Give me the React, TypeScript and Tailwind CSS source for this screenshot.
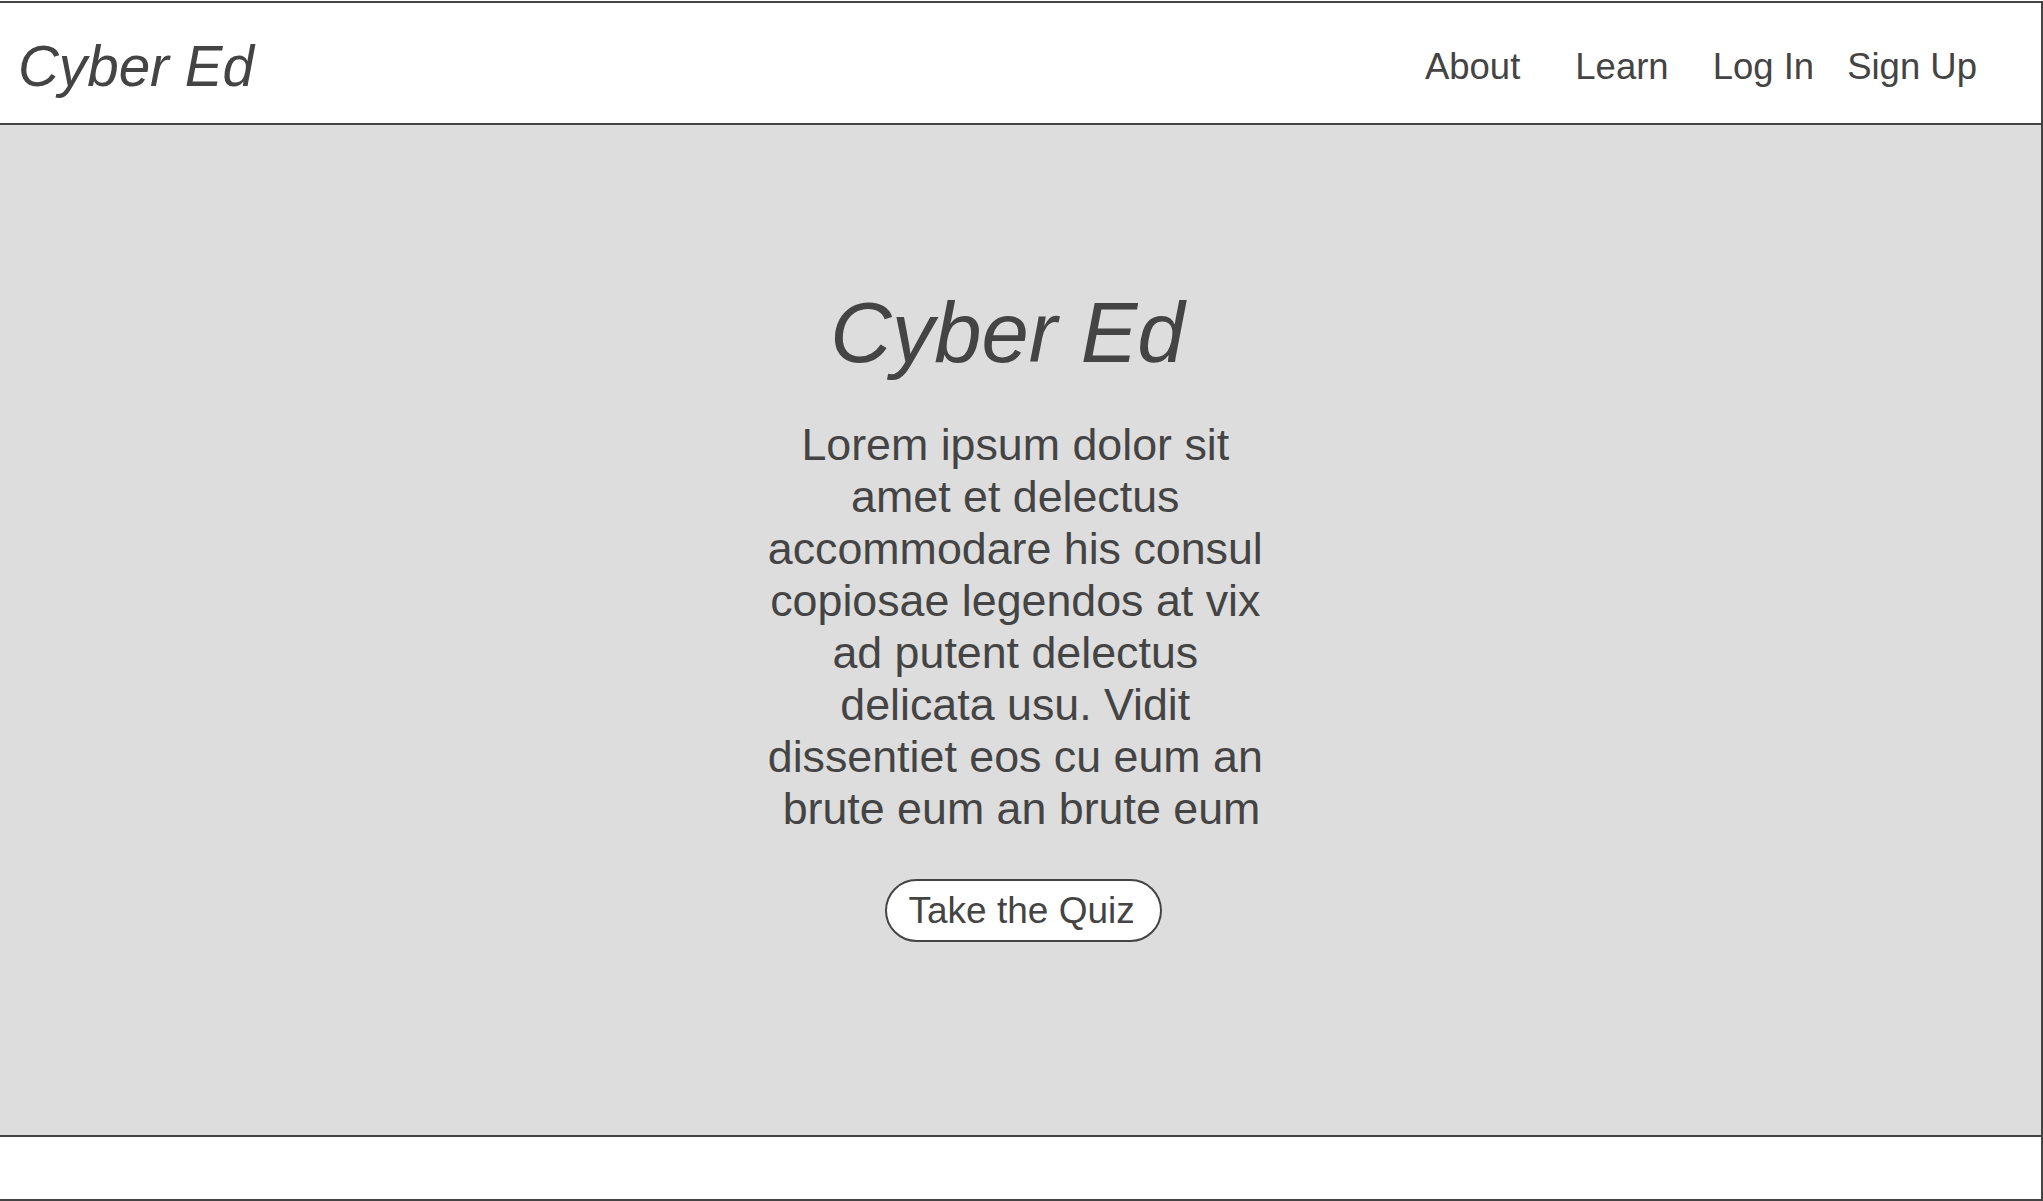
const navItems = [
  { label: 'About', gap: 'ml-0' },
  { label: 'Learn', gap: 'ml-[55px]' },
  { label: 'Log In', gap: 'ml-[44px]' },
  { label: 'Sign Up', gap: 'ml-[33px]' },
];

const lorem =
  'Lorem ipsum dolor sit amet et delectus accommodare his consul copiosae legendos at vix ad putent delectus delicata usu. Vidit dissentiet eos cu eum an brute eum an brute eum';

function Header() {
  return (
    <header className="flex h-[122px] items-center justify-between border-b-2 border-[#444] bg-white pt-[9px] pl-[18px] pr-[64px]">
      <a href="#" className="text-[56.6px] italic text-[#444]">
        Cyber Ed
      </a>
      <nav className="flex items-center">
        {navItems.map((item) => (
          <a key={item.label} href="#" className={`text-[36.5px] text-[#444] ${item.gap}`}>
            {item.label}
          </a>
        ))}
      </nav>
    </header>
  );
}

function Hero() {
  return (
    <main className="flex flex-1 flex-col items-center bg-[#dddddd] pt-[165px]">
      <h1 className="pr-[26px] text-[85px] leading-none italic text-[#444]">Cyber Ed</h1>
      <p className="mt-[43px] ml-[2px] w-[525px] text-center text-[44.75px] leading-[52px] text-[#444] [white-space:break-spaces]">
        {lorem}
      </p>
      <button className="mt-[45px] ml-[5px] flex h-[63px] w-[277px] items-center rounded-full border-2 border-[#444] bg-white pl-[22px] text-[37px] text-[#444]">
        Take the Quiz
      </button>
    </main>
  );
}

export default function App() {
  return (
    <div
      className="mt-px flex h-[1200px] w-full flex-col border-t-2 border-r-2 border-b-2 border-[#444] bg-white"
      style={{ fontFamily: '"Liberation Sans", Arial, sans-serif' }}
    >
      <Header />
      <Hero />
      <footer className="h-[64px] shrink-0 border-t-2 border-[#444] bg-white" />
    </div>
  );
}
